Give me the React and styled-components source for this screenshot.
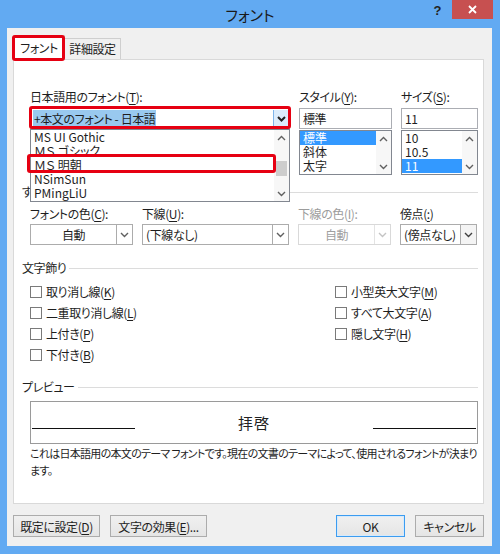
import React from 'react'
import styled, { createGlobalStyle, css } from 'styled-components'

const GlobalStyle = createGlobalStyle`
  html, body {
    margin: 0;
    padding: 0;
  }
  body {
    width: 500px;
    height: 554px;
    overflow: hidden;
    font-family: "Noto Sans CJK JP", "Noto Sans", sans-serif;
    font-size: 12px;
    letter-spacing: -0.4px;
    color: #1e1e1e;
    font-feature-settings: "palt" 1;
  }
`

const Window = styled.div`
  width: 500px;
  height: 554px;
  background: #62aaf2;
  display: flex;
  flex-direction: column;
`

const TitleBar = styled.div`
  height: 28px;
  flex: none;
  display: grid;
  grid-template-columns: 1fr auto 1fr;
  align-items: start;
`

const TitleText = styled.div`
  grid-column: 2;
  padding-top: 5px;
  font-size: 15px;
  line-height: 19px;
  letter-spacing: 0;
  color: #1a1a1a;
`

const TitleControls = styled.div`
  justify-self: end;
  display: flex;
  align-items: flex-start;
  padding-right: 7px;
`

const HelpGlyph = styled.span`
  font-family: "Liberation Sans", sans-serif;
  font-weight: bold;
  font-size: 13px;
  line-height: 13px;
  margin: 4px 11px 0 0;
  color: #222;
`

const CloseButton = styled.div`
  width: 41px;
  height: 19px;
  background: #c75050;
  display: flex;
  align-items: center;
  justify-content: center;
`

const Body = styled.div`
  flex: 1;
  min-height: 0;
  margin: 0 8px 8px 7px;
  background: #f0f0f0;
  display: flex;
  flex-direction: column;
  padding: 6px 8px 9px 6px;
`

const TabStrip = styled.div`
  height: 25px;
  flex: none;
  display: flex;
  align-items: flex-end;
  position: relative;
  z-index: 2;
`

const Tab = styled.div`
  position: relative;
  box-sizing: border-box;
  border: 1px solid #d9d9d9;
  border-bottom: none;
  white-space: nowrap;
  text-align: center;
  ${p => p.active ? css`
    width: 52px;
    height: 25px;
    margin-bottom: -1px;
    line-height: 24px;
    background: #fff;
  ` : css`
    width: 56px;
    height: 21px;
    line-height: 20px;
    background: #f0f0f0;
    border-color: #cfcfcf;
    border-left: none;
  `}
`

const RedMark = styled.span`
  position: absolute;
  inset: ${p => p.inset || '-2px'};
  border: 3px solid #e60012;
  border-radius: 3px;
  pointer-events: none;
  z-index: 6;
`

const Panel = styled.div`
  flex: 1;
  min-height: 0;
  box-sizing: border-box;
  background: #fff;
  border: 1px solid #d9d9d9;
  padding: 29px 5px 0 8px;
  display: flex;
  flex-direction: column;
`

const FieldRow = styled.div`
  display: flex;
  gap: 9px;
  padding-left: 8px;
  margin-top: ${p => p.mt || 0}px;
`

const Column = styled.div`
  width: ${p => p.w}px;
  position: relative;
  display: flex;
  flex-direction: column;
`

const FieldLabel = styled.div`
  height: 16px;
  line-height: 16px;
  margin-bottom: ${p => p.mb ?? 3}px;
  white-space: nowrap;
  color: ${p => (p.disabled ? '#9c9c9c' : '#1e1e1e')};
`

const Accel = styled.span`
  text-decoration: underline;
  text-underline-offset: 2px;
`

const TextBox = styled.div`
  height: 21px;
  box-sizing: border-box;
  border: 1px solid #abadb3;
  background: #fff;
  padding: 0 3px;
  line-height: 19px;
  white-space: nowrap;
`

const FontCombo = styled.div`
  position: relative;
  height: 21px;
  box-sizing: border-box;
  border: 1px solid #abadb3;
  background: #fff;
  display: flex;
  padding: 1px 0 1px 2px;
`

const Selection = styled.span`
  background: #99c9ef;
  padding: 0 1px;
  line-height: 17px;
  white-space: nowrap;
`

const HoverButton = styled.div`
  width: 15px;
  margin-left: auto;
  background: #dcecfc;
  border-left: 1px solid #7eb4ea;
  display: flex;
  align-items: center;
  justify-content: center;
`

const ListBox = styled.div`
  height: ${p => p.h}px;
  box-sizing: border-box;
  border: 1px solid #828790;
  background: #fff;
  display: flex;
  ${p => p.dropped ? css`
    position: absolute;
    top: calc(100% + 1px);
    left: -1px;
    right: -1px;
    z-index: 4;
  ` : css`
    margin-top: 1px;
  `}
`

const ListItems = styled.div`
  flex: 1;
  min-width: 0;
`

const ListItem = styled.div`
  position: relative;
  height: 14px;
  line-height: 14px;
  padding-left: 3px;
  letter-spacing: 0;
  white-space: nowrap;
  ${p => p.selected && css`
    background: #3399ff;
    color: #fff;
  `}
`

const ScrollBar = styled.div`
  width: 15px;
  flex: none;
  background: #f7f7f7;
  display: flex;
  flex-direction: column;
`

const ScrollArrow = styled.div`
  height: 15px;
  flex: none;
  display: flex;
  align-items: center;
  justify-content: center;
  margin-top: ${p => (p.bottom ? 'auto' : '0')};
`

const ScrollThumb = styled.div`
  height: 15px;
  margin: ${p => p.offset}px 2px 0;
  background: #cdcdcd;
`

const GroupHeading = styled.div`
  display: flex;
  align-items: center;
  gap: 3px;
  height: 14px;
  line-height: 14px;
  margin-top: ${p => p.mt}px;
  white-space: nowrap;
  &::after {
    content: '';
    flex: 1;
    height: 1px;
    background: #dcdcdc;
  }
`

const Combo = styled.div`
  height: 21px;
  box-sizing: border-box;
  border: 1px solid ${p => (p.disabled ? '#d9d9d9' : '#acacac')};
  background: #fff;
  display: flex;
  color: ${p => (p.disabled ? '#a0a0a0' : '#1e1e1e')};
`

const ComboText = styled.div`
  flex: 1;
  min-width: 0;
  line-height: 19px;
  white-space: nowrap;
  text-align: ${p => (p.center ? 'center' : 'left')};
  padding-left: ${p => (p.center ? 0 : 3)}px;
`

const ComboButton = styled.div`
  width: 15px;
  flex: none;
  display: flex;
  align-items: center;
  justify-content: center;
  border-left: 1px solid ${p => (p.disabled ? '#e3e3e3' : '#acacac')};
  ${p => p.split && css`
    margin: -1px -1px -1px 0;
    border: 1px solid #acacac;
    background: #f4f4f4;
  `}
`

const CheckArea = styled.div`
  display: flex;
  padding-left: 8px;
  margin-top: 6px;
`

const CheckColumn = styled.div`
  width: ${p => (p.w ? `${p.w}px` : 'auto')};
  display: flex;
  flex-direction: column;
`

const CheckRow = styled.div`
  height: 21px;
  display: flex;
  align-items: center;
  gap: 4px;
  white-space: nowrap;
`

const CheckBox = styled.span`
  width: 12px;
  height: 12px;
  flex: none;
  box-sizing: border-box;
  border: 1px solid #7a7a7a;
  background: #fff;
`

const PreviewBox = styled.div`
  width: 448px;
  height: 43px;
  box-sizing: border-box;
  margin: 7px 0 0 8px;
  border: 1px solid #9a9a9a;
  background: #fff;
  display: flex;
  align-items: center;
  padding: 0 1px;
`

const PreviewRule = styled.div`
  width: 103px;
  height: 1px;
  flex: none;
  background: #111;
  margin-top: 12px;
`

const PreviewSample = styled.div`
  flex: 1;
  text-align: center;
  font-size: 15px;
  letter-spacing: 1px;
  color: #222;
`

const Description = styled.div`
  margin: 1px 0 0 8px;
  font-size: 11px;
  letter-spacing: -0.7px;
  line-height: 17px;
  white-space: nowrap;
`

const ButtonRow = styled.div`
  height: 22px;
  flex: none;
  margin-top: 11px;
  display: flex;
  gap: 10px;
`

const Spacer = styled.div`
  flex: 1;
`

const DialogButton = styled.div`
  width: ${p => p.w}px;
  height: 22px;
  box-sizing: border-box;
  border: 1px solid ${p => (p.primary ? '#3c9cf0' : '#acacac')};
  background: linear-gradient(#f0f0f0, #e5e5e5);
  display: flex;
  align-items: center;
  justify-content: center;
  white-space: nowrap;
  ${p => p.primary && css`
    box-shadow: inset 0 0 0 1px #d6eafc;
  `}
`

function Chevron({ up, color = '#606060', weight = 1.4 }) {
  return (
    <svg width="9" height="6" viewBox="0 0 9 6">
      <polyline
        points={up ? '1,5 4.5,1.5 8,5' : '1,1 4.5,4.5 8,1'}
        fill="none"
        stroke={color}
        strokeWidth={weight}
      />
    </svg>
  )
}

function Scroll({ thumb }) {
  return (
    <ScrollBar>
      <ScrollArrow><Chevron up /></ScrollArrow>
      {thumb && <ScrollThumb offset={thumb} />}
      <ScrollArrow bottom><Chevron /></ScrollArrow>
    </ScrollBar>
  )
}

const fontList = ['MS UI Gothic', 'ＭＳ ゴシック', 'ＭＳ 明朝', 'NSimSun', 'PMingLiU']
const styleList = ['標準', '斜体', '太字']
const sizeList = ['10', '10.5', '11']

const leftChecks = [
  ['取り消し線(', 'K', ')'],
  ['二重取り消し線(', 'L', ')'],
  ['上付き(', 'P', ')'],
  ['下付き(', 'B', ')'],
]
const rightChecks = [
  ['小型英大文字(', 'M', ')'],
  ['すべて大文字(', 'A', ')'],
  ['隠し文字(', 'H', ')'],
]

function CheckItem({ item }) {
  return (
    <CheckRow>
      <CheckBox />
      <span>{item[0]}<Accel>{item[1]}</Accel>{item[2]}</span>
    </CheckRow>
  )
}

export default function App() {
  return (
    <>
      <GlobalStyle />
      <Window>
        <TitleBar>
          <TitleText>フォント</TitleText>
          <TitleControls>
            <HelpGlyph>?</HelpGlyph>
            <CloseButton>
              <svg width="9" height="9" viewBox="0 0 9 9">
                <path d="M1 1 L8 8 M8 1 L1 8" stroke="#fff" strokeWidth="1.8" />
              </svg>
            </CloseButton>
          </TitleControls>
        </TitleBar>

        <Body>
          <TabStrip>
            <Tab active>
              フォント
              <RedMark inset="-1px -1px -1px -2px" />
            </Tab>
            <Tab>詳細設定</Tab>
          </TabStrip>

          <Panel>
            <FieldRow>
              <Column w={260}>
                <FieldLabel>日本語用のフォント(<Accel>T</Accel>):</FieldLabel>
                <FontCombo>
                  <Selection>+本文のフォント - 日本語</Selection>
                  <HoverButton><Chevron color="#222" weight={2} /></HoverButton>
                  <RedMark inset="-3px -2px -1px -2px" />
                  <ListBox dropped h={73}>
                    <ListItems>
                      {fontList.map((name, i) => (
                        <ListItem key={name}>
                          {name}
                          {i === 2 && <RedMark inset="-4px -2px -1px -4px" />}
                        </ListItem>
                      ))}
                    </ListItems>
                    <Scroll thumb={16} />
                  </ListBox>
                </FontCombo>
              </Column>
              <Column w={93}>
                <FieldLabel>スタイル(<Accel>Y</Accel>):</FieldLabel>
                <TextBox>標準</TextBox>
                <ListBox h={45}>
                  <ListItems>
                    {styleList.map((s, i) => (
                      <ListItem key={s} selected={i === 0}>{s}</ListItem>
                    ))}
                  </ListItems>
                  <Scroll />
                </ListBox>
              </Column>
              <Column w={77}>
                <FieldLabel>サイズ(<Accel>S</Accel>):</FieldLabel>
                <TextBox>11</TextBox>
                <ListBox h={45}>
                  <ListItems>
                    {sizeList.map((s, i) => (
                      <ListItem key={s} selected={i === 2}>{s}</ListItem>
                    ))}
                  </ListItems>
                  <Scroll />
                </ListBox>
              </Column>
            </FieldRow>

            <GroupHeading mt={10}>すべての文字列</GroupHeading>

            <FieldRow mt={7}>
              <Column w={103}>
                <FieldLabel mb={2}>フォントの色(<Accel>C</Accel>):</FieldLabel>
                <Combo>
                  <ComboText center>自動</ComboText>
                  <ComboButton><Chevron /></ComboButton>
                </Combo>
              </Column>
              <Column w={147}>
                <FieldLabel mb={2}>下線(<Accel>U</Accel>):</FieldLabel>
                <Combo>
                  <ComboText>(下線なし)</ComboText>
                  <ComboButton><Chevron /></ComboButton>
                </Combo>
              </Column>
              <Column w={93}>
                <FieldLabel mb={2} disabled>下線の色(<Accel>I</Accel>):</FieldLabel>
                <Combo disabled>
                  <ComboText center>自動</ComboText>
                  <ComboButton disabled><Chevron color="#c4c4c4" /></ComboButton>
                </Combo>
              </Column>
              <Column w={77}>
                <FieldLabel mb={2}>傍点(<Accel>:</Accel>)</FieldLabel>
                <Combo>
                  <ComboText>(傍点なし)</ComboText>
                  <ComboButton split><Chevron color="#404040" /></ComboButton>
                </Combo>
              </Column>
            </FieldRow>

            <GroupHeading mt={16}>文字飾り</GroupHeading>

            <CheckArea>
              <CheckColumn w={305}>
                {leftChecks.map(item => <CheckItem key={item[0]} item={item} />)}
              </CheckColumn>
              <CheckColumn>
                {rightChecks.map(item => <CheckItem key={item[0]} item={item} />)}
              </CheckColumn>
            </CheckArea>

            <GroupHeading mt={15}>プレビュー</GroupHeading>

            <PreviewBox>
              <PreviewRule />
              <PreviewSample>拝啓</PreviewSample>
              <PreviewRule />
            </PreviewBox>

            <Description>
              これは日本語用の本文のテーマ フォントです。現在の文書のテーマによって、使用されるフォントが決まり
              <br />
              ます。
            </Description>
          </Panel>

          <ButtonRow>
            <DialogButton w={87}>既定に設定(<Accel>D</Accel>)</DialogButton>
            <DialogButton w={97}>文字の効果(<Accel>E</Accel>)...</DialogButton>
            <Spacer />
            <DialogButton w={69} primary>OK</DialogButton>
            <DialogButton w={69}>キャンセル</DialogButton>
          </ButtonRow>
        </Body>
      </Window>
    </>
  )
}
